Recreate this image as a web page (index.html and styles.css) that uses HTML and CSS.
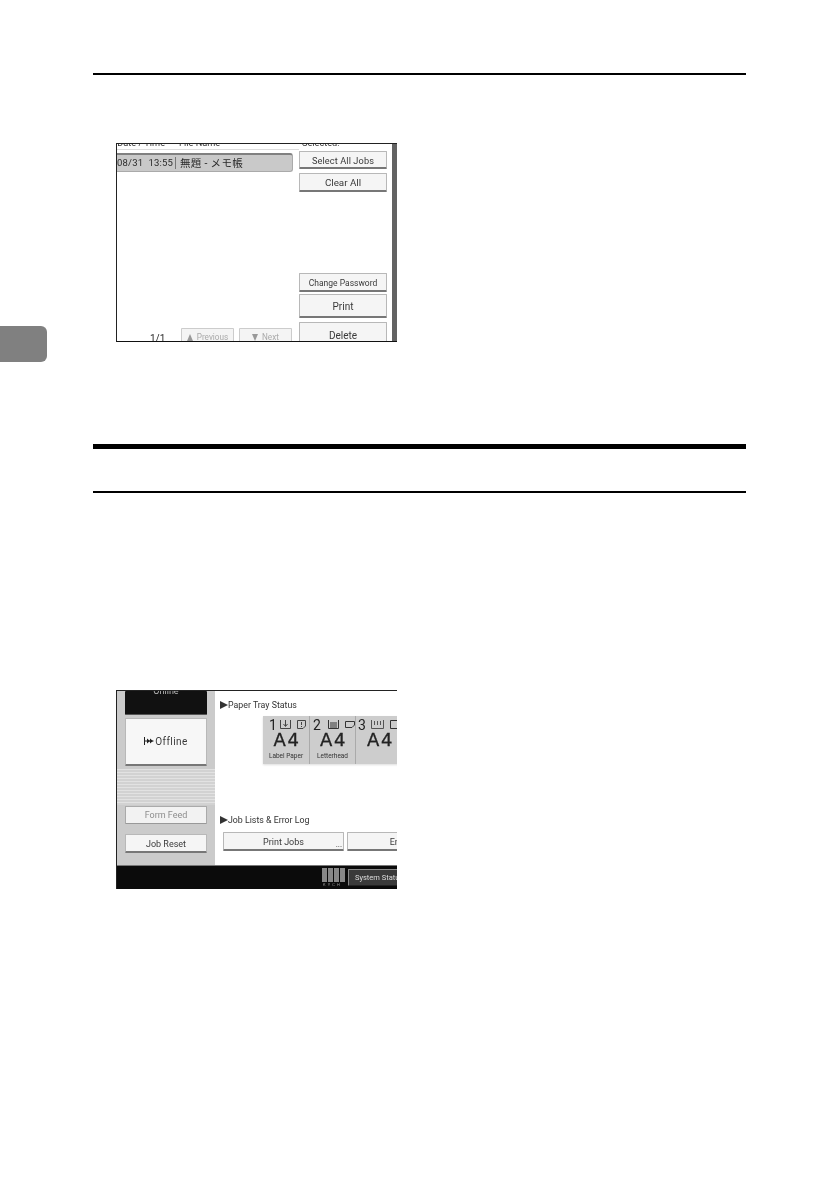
FILE: index.html
```html
<!DOCTYPE html>
<html lang="en">
<head>
<meta charset="utf-8">
<title>Printer panel</title>
<link rel="stylesheet" href="styles.css">
</head>
<body>
<div class="tab"></div>
<main class="page">
  <hr class="rule rule-top">

  <section class="screen screen-jobs">
    <div class="jobs-left">
      <div class="clip-head"><span class="clip-text head-a">Date / Time</span><span class="clip-text head-b">File Name</span></div>
      <div class="job-row"><span class="job-time">08/31&nbsp; 13:55</span><span class="job-sep"></span><span class="job-name">無題 - メモ帳</span></div>
      <div class="pager">
        <span class="pager-count">1/1</span>
        <span class="btn btn-disabled pager-btn"><i class="tri-up"></i>Previous</span>
        <span class="btn btn-disabled pager-btn"><i class="tri-down"></i>Next</span>
      </div>
    </div>
    <div class="jobs-right">
      <div class="clip-head"><span class="clip-text head-sel">Selected:</span></div>
      <span class="btn btn-select">Select All Jobs</span>
      <span class="btn btn-clear">Clear All</span>
      <span class="btn btn-pass">Change Password</span>
      <span class="btn btn-print">Print</span>
      <span class="btn btn-delete">Delete</span>
    </div>
    <div class="side-bar"></div>
  </section>

  <hr class="rule rule-thick">
  <hr class="rule rule-mid">

  <section class="screen screen-status">
    <div class="status-main">
      <aside class="panel">
        <span class="btn btn-online"><span class="online-text">Online</span></span>
        <span class="btn btn-offline">
          <svg class="off-icon" width="10" height="8" viewBox="0 0 10 8"><path d="M.5 0V8M9.500 4H1" stroke="#222" stroke-width="1"/><path d="M3 1.500 6 4 3 6.500ZM6 1.500 9 4 6 6.500Z" fill="#222"/></svg>Offline
        </span>
        <div class="stripes"></div>
        <span class="btn btn-form">Form Feed</span>
        <span class="btn btn-reset">Job Reset</span>
      </aside>
      <div class="status-body">
        <h2 class="sec-title sec-tray"><i class="sec-mark"></i>Paper Tray Status</h2>
        <div class="trays">
          <div class="tray tray-one">
            <div class="tray-top"><span class="tray-num">1</span>
              <svg class="ic" width="11" height="9" viewBox="0 0 11 9"><path d="M.5 0V8.500H10.500V0M5.500 0V6M3.500 4 5.500 6.500 7.500 4" fill="none" stroke="#444"/></svg>
              <svg class="ic" width="9" height="9" viewBox="0 0 9 9"><path d="M.5.500H8.500V6L6 8.500H.5ZM4.500 2V5M4.500 6V7" fill="none" stroke="#444"/></svg>
            </div>
            <div class="tray-size">A4</div>
            <div class="tray-label">Label Paper</div>
          </div>
          <div class="tray tray-two">
            <div class="tray-top"><span class="tray-num">2</span>
              <svg class="ic" width="11" height="9" viewBox="0 0 11 9"><path d="M.5 0V8.500H10.500V0" fill="none" stroke="#333"/><path d="M2 3H9M2 5H9M2 7H9" stroke="#333"/></svg>
              <svg class="ic" width="10" height="7" viewBox="0 0 10 7"><path d="M.5.500H9.500V4L7 6.500H.5Z" fill="none" stroke="#333"/></svg>
            </div>
            <div class="tray-size">A4</div>
            <div class="tray-label">Letterhead</div>
          </div>
          <div class="tray tray-three">
            <div class="tray-top"><span class="tray-num">3</span>
              <svg class="ic" width="13" height="9" viewBox="0 0 13 9"><path d="M.5 0V8.500H12.500V0M3.500 1V5M6.500 1V5M9.500 1V5" fill="none" stroke="#555"/></svg>
              <svg class="ic" width="9" height="9" viewBox="0 0 9 9"><path d="M.5.500H8.500V8.500H.5Z" fill="none" stroke="#333"/></svg>
            </div>
            <div class="tray-size">A4</div>
          </div>
        </div>
        <h2 class="sec-title sec-jobs"><i class="sec-mark"></i>Job Lists &amp; Error Log</h2>
        <div class="job-btns">
          <span class="btn btn-jobs">Print Jobs<span class="dots">...</span></span>
          <span class="btn btn-error">Error Log</span>
        </div>
      </div>
    </div>
    <footer class="status-bar">
      <div class="logo">
        <div class="logo-bars"><i></i><i></i><i></i><i></i></div>
        <div class="logo-text">KYCH</div>
      </div>
      <span class="btn btn-system">System Status</span>
    </footer>
  </section>
</main>
</body>
</html>
```
FILE: styles.css
```css
* { box-sizing: border-box; }
html, body { margin: 0; padding: 0; background: #fff; }
body { width: 840px; height: 1190px; overflow: hidden; position: relative; font-family: Roboto, "Liberation Sans", sans-serif; color: #333; }

.page { padding: 73px 94px 0 93px; }
.tab { position: absolute; left: 0; top: 326px; width: 47px; height: 36px; background: #808080; border-radius: 0 6px 6px 0; }

.rule { border: 0; margin: 0; background: #000; }
.rule-top { height: 1.500px; }
.rule-thick { height: 5px; margin-top: 102px; }
.rule-mid { height: 2px; margin-top: 42px; }

.screen { width: 281px; height: 199px; margin-left: 23px; overflow: hidden; }
.screen-jobs { margin-top: 68px; display: flex; border-top: 1px solid #222; border-left: 1px solid #222; border-bottom: 1px solid #111; filter: blur(.35px); }
.screen-status { margin-top: 197px; display: flex; flex-direction: column; border-top: 1px solid #222; border-left: 1px solid #222; filter: blur(.35px); }

.btn { display: flex; align-items: center; justify-content: center; flex: none; padding-top: 2px; font-size: 9px; white-space: nowrap; background: #f5f5f5; border: 1px solid #b8b8b8; border-bottom: 2px solid #777; border-radius: 1px; color: #3a3a3a; }

.jobs-left { width: 182px; display: flex; flex-direction: column; flex: none; }
.jobs-right { width: 88px; display: flex; flex-direction: column; flex: none; }
.side-bar { width: 5px; margin-left: 5px; flex: none; background: #636363; }

.clip-head { height: 6px; overflow: hidden; font-size: 9.200px; line-height: 10px; display: flex; flex: none; border-bottom: 1px solid #ddd; }
.clip-text { display: block; margin-top: -6px; color: #333; white-space: nowrap; }
.head-a { width: 48px; text-align: right; }
.head-b { margin-left: 14px; }
.head-sel { margin-left: 3px; }
.jobs-right .clip-head { border: 0; height: 7px; }

.job-row { margin-top: 3px; width: 176px; height: 19px; display: flex; align-items: center; background: #c9c9c9; border-top: 2px solid #808080; border-right: 1px solid #aaa; border-bottom: 1px solid #aaa; border-radius: 0 3px 3px 0; font-size: 9.500px; white-space: nowrap; overflow: hidden; color: #2a2a2a; }
.job-time { letter-spacing: .2px; width: 58px; flex: none; }
.job-sep { width: 1px; height: 12px; background: #777; margin: 0 4px 0 0; flex: none; }
.job-name { font-family: Roboto, "Noto Sans CJK JP", sans-serif; font-size: 10.500px; letter-spacing: .3px; }

.pager { margin-top: auto; margin-bottom: -7px; height: 20px; display: flex; align-items: flex-start; flex: none; }
.pager-count { width: 64px; padding: 5px 0 0 33px; font-size: 10px; color: #2a2a2a; flex: none; }
.pager-btn { width: 53px; height: 20px; margin-right: 5px; padding-top: 0; background: #f4f4f4; border-color: #ccc; color: #aaa; font-size: 8.200px; }
.tri-up, .tri-down { width: 0; height: 0; margin-right: 4px; border-left: 3.500px solid transparent; border-right: 3.500px solid transparent; }
.tri-up { border-bottom: 7px solid #999; }
.tri-down { border-top: 7px solid #999; }

.btn-select { height: 18px; font-size: 9.200px; letter-spacing: .1px; }
.btn-clear { height: 19px; margin-top: 4px; font-size: 9.800px; }
.btn-pass { height: 19px; margin-top: 81px; font-size: 8.500px; }
.btn-print { height: 24px; margin-top: 2px; font-size: 10px; padding-top: 3px; }
.btn-delete { height: 26px; margin-top: 4px; font-size: 10px; padding-top: 3px; }

.status-main { display: flex; flex: none; height: 175px; background: #fff; border-bottom: 1px solid #777; }
.panel { width: 98px; flex: none; display: flex; flex-direction: column; padding-left: 8px; background: #cbcbcb; }
.panel .btn { width: 82px; }
.btn-online { height: 24px; background: #111; border: 0; border-bottom: 1px solid #555; color: #bbb; align-items: flex-start; padding-top: 0; }
.online-text { margin-top: -5px; }
.btn-offline { height: 48px; margin-top: 3px; padding-top: 0; background: #f7f7f7; font-size: 10px; letter-spacing: .4px; }
.off-icon { margin-right: 1px; }
.stripes { height: 36px; margin: 3px 0 1px -8px; flex: none; background: repeating-linear-gradient(#e2e2e2 0 1px, #d2d2d2 1px 3px); }
.btn-form { height: 18px; padding-top: 0; background: #f2f2f2; border-color: #aaa; border-bottom: 1px solid #999; color: #8d8d8d; }
.btn-reset { height: 19px; margin-top: 10px; }

.status-body { flex: 1; min-width: 0; display: flex; flex-direction: column; overflow: hidden; }
.sec-title { margin: 0; display: flex; align-items: center; height: 12px; font-size: 8.800px; font-weight: 400; white-space: nowrap; color: #333; padding-left: 5px; }
.sec-mark { width: 0; height: 0; border-left: 8px solid #333; border-top: 4px solid transparent; border-bottom: 4px solid transparent; flex: none; }
.sec-tray { margin-top: 8px; }
.sec-jobs { margin-top: 50px; }

.trays { margin: 5px 0 0 48px; width: 140px; height: 48px; display: flex; flex: none; background: #cdcdcd; box-shadow: 0 1px 2px #ddd; }
.tray { flex: none; height: 48px; border-right: 1px solid #aaa; padding-top: 3px; color: #222; }
.tray-one { width: 47px; }
.tray-two { width: 46px; }
.tray-three { width: 47px; border: 0; }
.tray-top { display: flex; align-items: center; height: 12px; padding-left: 6px; gap: 6px; }
.tray-two .tray-top { padding-left: 3px; }
.tray-three .tray-top { padding-left: 2px; }
.tray-num { font-size: 14px; line-height: 12px; width: 5px; flex: none; }
.tray-two .tray-num { width: 9px; }
.tray-three .tray-num { width: 7px; }
.ic { flex: none; }
.tray-size { font-family: "DejaVu Sans", sans-serif; font-size: 18px; line-height: 16px; letter-spacing: 1.500px; text-align: center; margin-top: 1px; color: #222; padding-left: 2px; -webkit-text-stroke: .3px #222; }
.tray-label { font-size: 6.500px; line-height: 9px; text-align: center; margin-top: 4px; color: #333; white-space: nowrap; }

.job-btns { margin: 6px 0 0 8px; display: flex; gap: 3px; flex: none; width: 250px; }
.btn-jobs { width: 121px; height: 19px; position: relative; }
.btn-error { width: 122px; height: 19px; }
.dots { position: absolute; right: 1px; bottom: 0; font-size: 8px; line-height: 8px; }

.status-bar { flex: none; height: 24px; background: #0b0b0b; display: flex; align-items: flex-start; padding: 0 0 0 205px; overflow: hidden; }
.logo { width: 24px; flex: none; padding-top: 2px; }
.logo-bars { display: flex; gap: 1px; height: 14px; }
.logo-bars i { width: 5px; background: #888; }
.logo-text { font-size: 4px; line-height: 5px; color: #999; letter-spacing: 2.200px; white-space: nowrap; padding-left: 1px; }
.btn-system { width: 70px; height: 17px; margin: 3px 0 0 2px; justify-content: flex-start; padding: 0 0 0 6px; background: #3a3a3a; border: 1px solid #888; border-bottom: 1px solid #222; color: #ddd; font-size: 7.500px; }
```
